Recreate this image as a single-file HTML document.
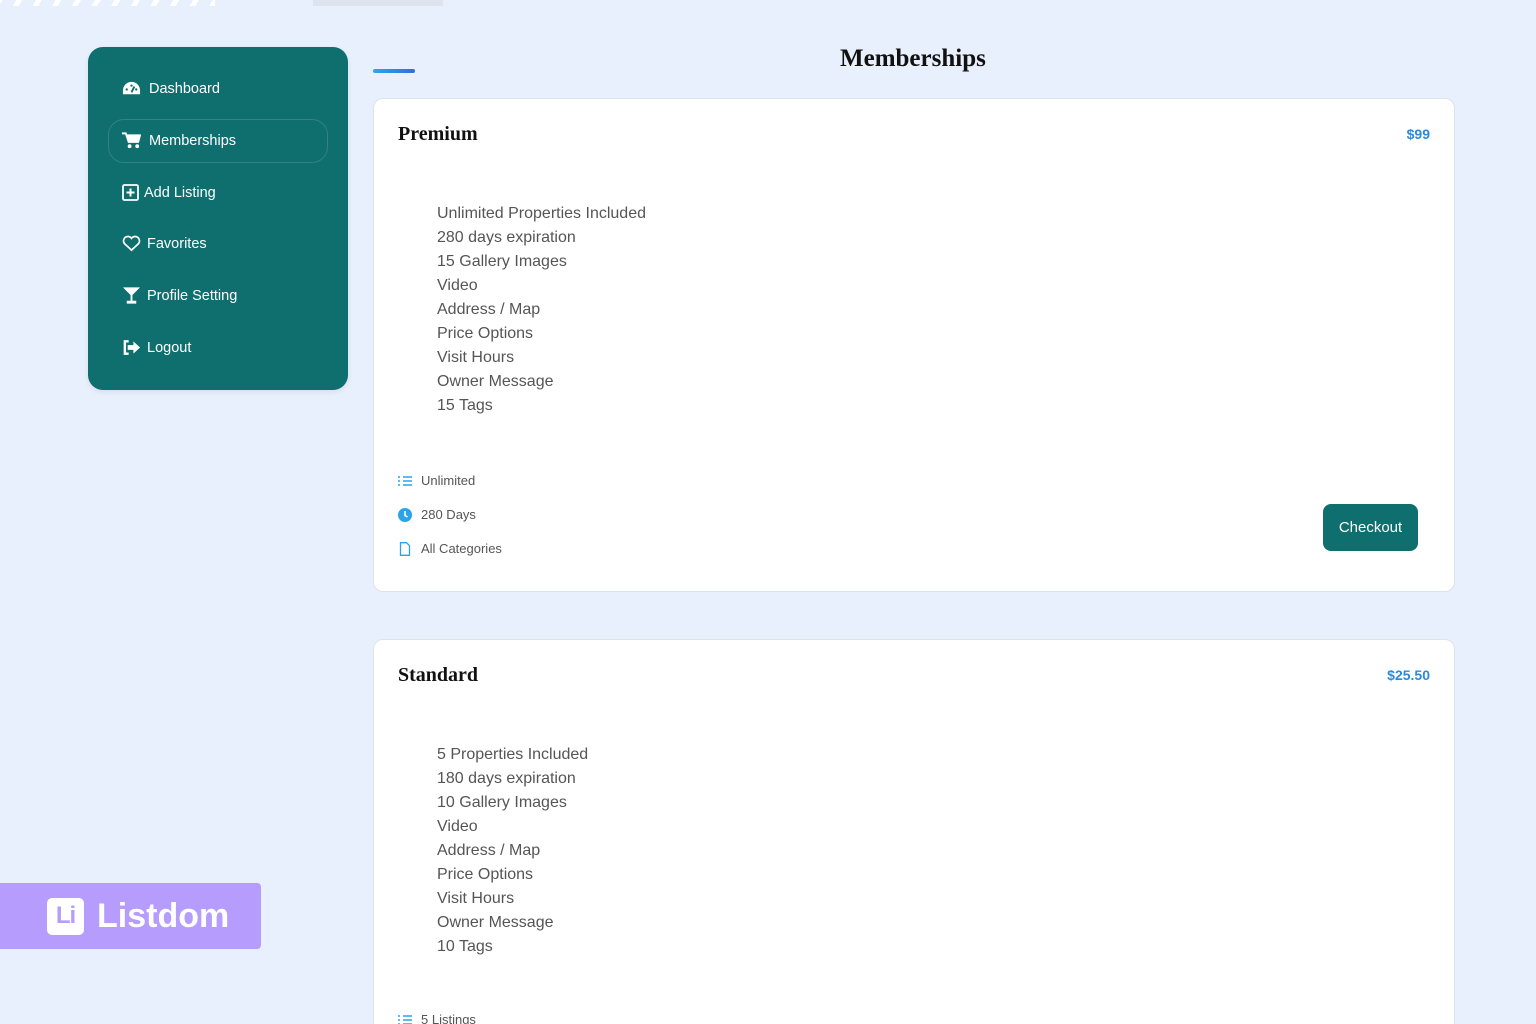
<!DOCTYPE html>
<html><head><meta charset="utf-8"><style>
*{margin:0;padding:0;box-sizing:border-box}
html{width:1536px;height:1024px;overflow:hidden}
body{width:1536px;height:1024px;overflow:hidden;background:#e8f0fd;font-family:"Liberation Sans",sans-serif;position:relative}
.stripes{position:absolute;left:0;top:0;width:215px;height:6px;background:repeating-linear-gradient(-60deg,#fff 0 5px,transparent 5px 17px)}
.gbar{position:absolute;left:313px;top:0;width:130px;height:6px;background:#dde4ee}
.side{position:absolute;left:88px;top:47px;width:260px;height:343px;background:#0f6e6e;border-radius:15px;box-shadow:0 2px 6px rgba(0,0,0,.08)}
.item{position:absolute;left:34px;color:#fff;font-size:14.5px;display:flex;align-items:center;gap:8px}
.item svg{width:19px;height:17px}
.active{position:absolute;left:20px;top:72px;width:220px;height:44px;border:1px solid rgba(255,255,255,.15);border-radius:16px}
.uline{position:absolute;left:373px;top:69px;width:42px;height:4px;border-radius:2px;background:linear-gradient(90deg,#2fa6e8,#2d6fd8)}
h1{position:absolute;left:840px;top:45px;font-family:"Liberation Serif",serif;font-size:25px;font-weight:bold;color:#111}
.card{position:absolute;left:373px;width:1082px;background:#fff;border:1px solid #dde3ea;border-radius:10px}
.card h2{position:absolute;left:24px;top:24px;font-family:"Liberation Serif",serif;font-size:20px;font-weight:bold;color:#111}
.price{position:absolute;right:24px;top:27px;color:#2a8ae0;font-weight:bold;font-size:14px}
.feat{position:absolute;left:63px;top:103px;font-size:16px;line-height:24px;color:#555}
.meta{position:absolute;left:24px;font-size:13px;color:#555;display:flex;align-items:center;gap:9px}
.meta svg{width:14px;height:14px}
.btn{position:absolute;left:949px;top:405px;width:95px;height:47px;background:#0f6e6e;border-radius:8px;color:#fff;font-size:15px;display:flex;align-items:center;justify-content:center}
.badge{position:absolute;left:0;top:883px;width:261px;height:66px;background:#b69cfc;border-radius:0 4px 4px 0;display:flex;align-items:center;color:#fff;font-size:34px;font-weight:bold}
.logo{margin-left:47px;margin-right:13px;width:37px;height:37px;background:#fff;border-radius:5px;color:#b69cfc;font-size:24px;display:flex;align-items:center;justify-content:center;letter-spacing:-1px}
</style></head><body>
<div class="stripes"></div><div class="gbar"></div>
<div class="side">
<div class="active"></div>
<div class="item" style="top:33px"><svg viewBox="0 0 20 16"><path d="M10 1A9 9 0 0 0 1 10v4h18v-4A9 9 0 0 0 10 1z" fill="#fff"/><path d="M10 12l3-6" stroke="#0f6e6e" stroke-width="2"/><circle cx="5" cy="9" r="1.2" fill="#0f6e6e"/><circle cx="10" cy="5" r="1.2" fill="#0f6e6e"/><circle cx="15" cy="9" r="1.2" fill="#0f6e6e"/></svg>Dashboard</div>
<div class="item" style="top:85px"><svg viewBox="0 0 20 17"><path d="M0 1h4l3 9h10l2-7H5" fill="none" stroke="#fff" stroke-width="2"/><path d="M5 3h14l-2 7H7z" fill="#fff"/><circle cx="8" cy="14.5" r="2" fill="#fff"/><circle cx="16" cy="14.5" r="2" fill="#fff"/></svg>Memberships</div>
<div class="item" style="top:137px;gap:5px"><svg viewBox="0 0 17 17" style="width:17px"><rect x="1" y="1" width="15" height="15" rx="1.5" fill="none" stroke="#fff" stroke-width="1.8"/><path d="M8.5 4.5v8M4.5 8.5h8" stroke="#fff" stroke-width="2"/></svg>Add Listing</div>
<div class="item" style="top:188px;gap:6px"><svg viewBox="0 0 20 17"><path d="M10 15.5L2.5 8.5A4.3 4.3 0 0 1 10 3a4.3 4.3 0 0 1 7.5 5.5z" fill="none" stroke="#fff" stroke-width="1.8"/></svg>Favorites</div>
<div class="item" style="top:240px;gap:6px"><svg viewBox="0 0 20 17"><path d="M1 0h18l-8 8v6h4v3H5v-3h4V8z" fill="#fff"/></svg>Profile Setting</div>
<div class="item" style="top:292px;gap:6px"><svg viewBox="0 0 20 17"><path d="M7 2H3v13h4" fill="none" stroke="#fff" stroke-width="2.5"/><path d="M6 6h6V2l7 6.5-7 6.5v-4H6z" fill="#fff"/></svg>Logout</div>
</div>
<div class="uline"></div>
<h1>Memberships</h1>
<div class="card" style="top:98px;height:494px">
<h2>Premium</h2><div class="price">$99</div>
<div class="feat">Unlimited Properties Included<br>280 days expiration<br>15 Gallery Images<br>Video<br>Address / Map<br>Price Options<br>Visit Hours<br>Owner Message<br>15 Tags</div>
<div class="meta" style="top:374px"><svg viewBox="0 0 14 14"><path d="M5 3h9M5 7h9M5 11h9" stroke="#2aa3ea" stroke-width="1.5"/><path d="M1 2v2M1 6v2M1 10v2" stroke="#2aa3ea" stroke-width="1.5"/></svg>Unlimited</div>
<div class="meta" style="top:408px"><svg viewBox="0 0 14 14"><circle cx="7" cy="7" r="7" fill="#2aa3ea"/><path d="M7 3v4.5l2.5 1.5" stroke="#fff" stroke-width="1.6" fill="none"/></svg>280 Days</div>
<div class="meta" style="top:442px"><svg viewBox="0 0 14 14"><path d="M2.5 .7h6l3 3v9.6h-9z" fill="none" stroke="#2aa3ea" stroke-width="1.3"/></svg>All Categories</div>
<div class="btn">Checkout</div>
</div>
<div class="card" style="top:639px;height:420px">
<h2>Standard</h2><div class="price">$25.50</div>
<div class="feat" style="top:103px">5 Properties Included<br>180 days expiration<br>10 Gallery Images<br>Video<br>Address / Map<br>Price Options<br>Visit Hours<br>Owner Message<br>10 Tags</div>
<div class="meta" style="top:372px"><svg viewBox="0 0 14 14"><path d="M5 3h9M5 7h9M5 11h9" stroke="#2aa3ea" stroke-width="1.5"/><path d="M1 2v2M1 6v2M1 10v2" stroke="#2aa3ea" stroke-width="1.5"/></svg>5 Listings</div>
</div>
<div class="badge"><div class="logo">Li</div>Listdom</div>
</body></html>
